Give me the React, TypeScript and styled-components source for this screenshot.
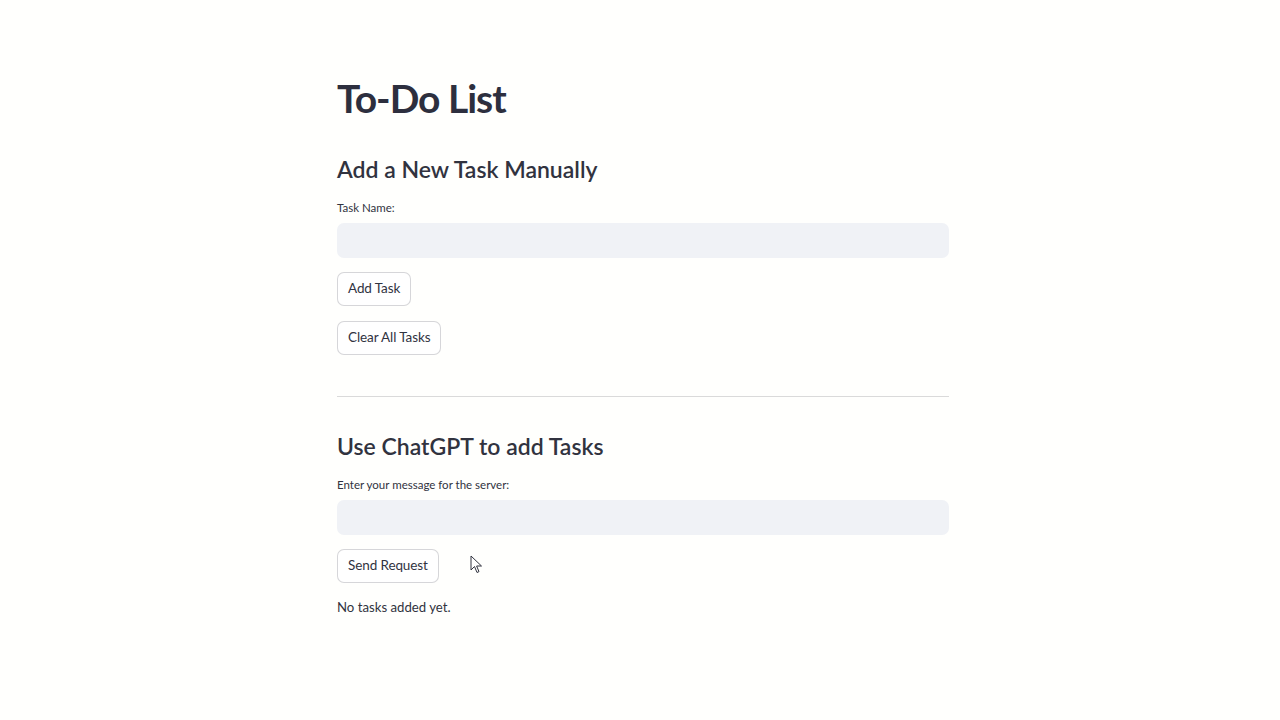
import React from "react";
import styled, { createGlobalStyle } from "styled-components";

const Global = createGlobalStyle`
  html, body { margin: 0; padding: 0; background: #fffffd; }
  body { font-family: "Lato", "Noto Sans", sans-serif; color: #31333f; }
  * { box-sizing: border-box; }
`;

const Page = styled.main`
  width: 100%;
  min-height: 720px;
  display: flex;
  justify-content: center;
  position: relative;
`;

const Column = styled.div`
  width: 618px;
  padding: 74px 0 0 6px;
  display: flex;
  flex-direction: column;
  align-items: flex-start;
`;

const Title = styled.h1`
  margin: 0;
  font-size: 39px;
  line-height: 48px;
  font-weight: 700;
  color: #2d2f3e;
  letter-spacing: -1px;
`;

const Heading = styled.h3<{ $top: number }>`
  margin: ${(p) => p.$top}px 0 0;
  font-size: 23px;
  line-height: 29px;
  font-weight: 600;
  color: #31333f;
`;

const Label = styled.label<{ $top: number }>`
  margin-top: ${(p) => p.$top}px;
  font-size: 11.5px;
  line-height: 15px;
  color: #31333f;
`;

const Input = styled.input`
  margin-top: 8px;
  width: 100%;
  height: 35px;
  border: none;
  border-radius: 7px;
  background: #f0f2f6;
  outline: none;
  padding: 0 10px;
  font: inherit;
`;

const Button = styled.button<{ $top: number }>`
  margin-top: ${(p) => p.$top}px;
  height: 34px;
  padding: 0 10px;
  border: 1px solid rgba(49, 51, 63, 0.2);
  border-radius: 7px;
  background: #ffffff;
  color: #31333f;
  font-family: inherit;
  font-size: 13.5px;
  letter-spacing: -0.1px;
  line-height: 1;
`;

const Divider = styled.hr`
  margin: 41px 0 0;
  width: 100%;
  border: none;
  border-top: 1px solid rgba(49, 51, 63, 0.18);
  height: 0;
`;

const Note = styled.p`
  margin: 16px 0 0;
  font-size: 13.2px;
  line-height: 17px;
  color: #31333f;
`;

const Cursor = styled.svg`
  position: absolute;
  left: 470px;
  top: 555px;
  width: 13px;
  height: 20px;
`;

export default function App() {
  return (
    <>
      <Global />
      <Page>
        <Column>
          <Title>To-Do List</Title>
          <Heading $top={33}>Add a New Task Manually</Heading>
          <Label $top={16}>Task Name:</Label>
          <Input aria-label="Task Name" />
          <Button $top={14}>Add Task</Button>
          <Button $top={15}>Clear All Tasks</Button>
          <Divider />
          <Heading $top={35}>Use ChatGPT to add Tasks</Heading>
          <Label $top={16}>Enter your message for the server:</Label>
          <Input aria-label="Enter your message for the server" />
          <Button $top={14}>Send Request</Button>
          <Note>No tasks added yet.</Note>
        </Column>
        <Cursor viewBox="0 0 13 20">
          <path
            d="M1 1 L1 15 L4.5 11.5 L7 17.5 L9 16.6 L6.6 11 L11.5 11 Z"
            fill="#ffffff"
            stroke="#31333f"
            strokeWidth="1"
            strokeLinejoin="round"
          />
        </Cursor>
      </Page>
    </>
  );
}
